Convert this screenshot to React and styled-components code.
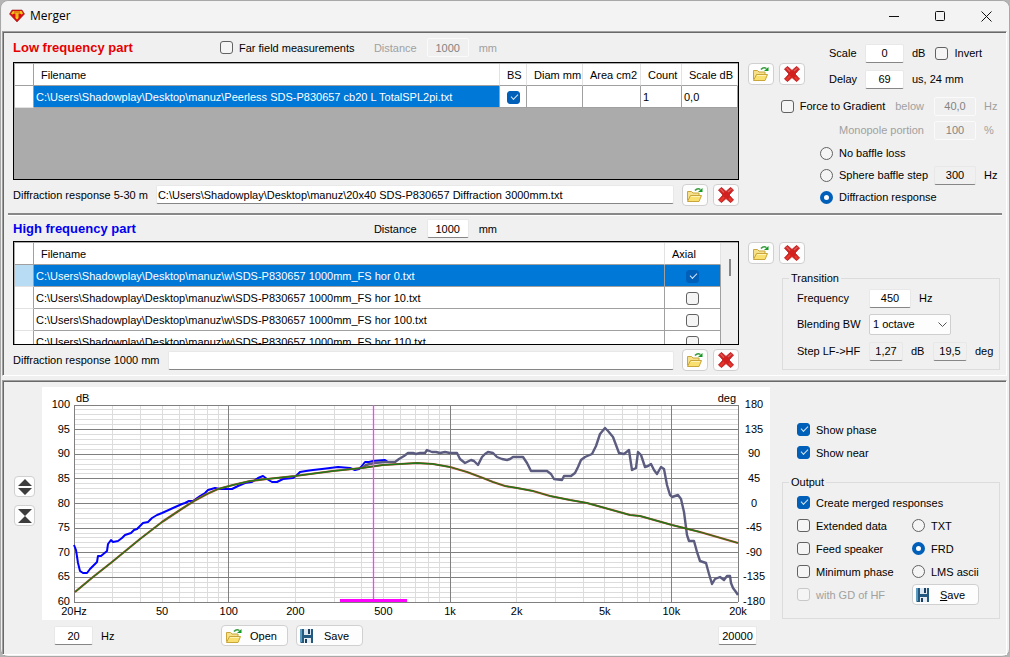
import { useState } from 'react';
import styled, { createGlobalStyle, css } from 'styled-components';

const GlobalStyle = createGlobalStyle`
  * {
    box-sizing: border-box;
  }
  body {
    margin: 0;
    background: #b4b4b4;
    color: #000;
    font-family: 'Liberation Sans', Arial, sans-serif;
    font-size: 11px;
    line-height: 14px;
  }
  input, button, select {
    font: inherit;
    color: inherit;
    margin: 0;
  }
`;

const folder = 'C:\\Users\\Shadowplay\\Desktop\\manuz\\';

const farFiles = ['0', '10', '100', '110'].map((angle) => ({
  name: `${folder}w\\SDS-P830657 1000mm_FS hor ${angle}.txt`,
  axial: angle === '0',
}));

const lowColumns = [
  { title: 'Filename', width: 466 },
  { title: 'BS', width: 27 },
  { title: 'Diam mm', width: 56 },
  { title: 'Area cm2', width: 58 },
  { title: 'Count', width: 41 },
  { title: 'Scale dB', width: 56 },
];

const highCurve =
  '74,545 76,550 78,563 80,571 83,573 87,573 90,569 97,562 98,556 101,556 107,551 108,544 111,540 113,542 118,541 122,538 125,535 131,533 134,530 137,529 143,523 148,522 152,518 157,515 162,513 173,508 182,504 185,503 189,501 193,501 200,496 205,493 208,490 215,488 220,489 232,489 238,486 245,483 252,482 258,478 263,476 267,479 272,482 277,482 283,479 293,478 296,476 300,472 306,471 313,470 322,469 330,468 338,467 350,468 355,470 359,469 361,467 365,462 369,462 373,461 385,460 388,462';

const mergedCurve =
  '362,468 366,465 374,463 385,462 395,462 399,459 404,456 408,453 413,453 416,454 420,453 425,453 427,450 432,452 436,452 440,453 445,452 450,453 457,453 460,459 465,463 471,460 474,461 478,465 482,457 485,454 488,452 493,453 497,457 502,459 507,460 510,459 513,457 523,457 527,463 531,471 547,471 551,474 554,479 562,480 564,476 571,476 575,473 578,467 581,460 585,457 592,454 596,446 600,434 605,428 608,431 613,437 616,445 619,453 624,454 629,450 630,457 632,470 636,468 638,452 641,455 645,467 648,466 651,464 654,470 657,474 661,467 664,469 667,485 670,495 672,497 678,495 681,499 684,512 687,535 689,541 694,541 697,552 700,561 706,563 709,574 712,584 715,579 720,577 724,580 727,576 730,576 731,583 733,588 736,592 738,595';

const nearCurve =
  '75,592 93,577 112,562 140,539 162,522 180,510 194,501 207,494 218,489 233,485 250,481 267,479 295,476 333,471 362,468 383,465 400,464 417,463 433,464 450,467 467,472 483,478 493,482 505,486 517,488 533,491 550,496 570,500 587,503 605,508 630,515 640,516 672,525 700,532 738,543';

const plot = { left: 74, right: 738, top: 405, bottom: 602 };

const freqX = (hz) =>
  plot.left + ((plot.right - plot.left) * Math.log10(hz / 20)) / 3;
const levelY = (db) =>
  plot.bottom - ((plot.bottom - plot.top) * (db - 60)) / 40;

const freqLines = [10, 100, 1000, 10000]
  .flatMap((decade) => [1, 2, 3, 4, 5, 6, 7, 8, 9].map((n) => n * decade))
  .filter((hz) => hz > 20 && hz < 20000);

const freqLabels = [
  [20, '20Hz'],
  [50, '50'],
  [100, '100'],
  [200, '200'],
  [500, '500'],
  [1000, '1k'],
  [2000, '2k'],
  [5000, '5k'],
  [10000, '10k'],
  [20000, '20k'],
];

const levels = Array.from({ length: 41 }, (_, i) => 60 + i);
const majors = levels.filter((db) => db % 5 === 0);

const FolderIcon = () => (
  <svg width='18' height='16' viewBox='0 0 18 16' aria-hidden='true'>
    <path d='M1.500 13.500V4.500h4l1.500 1.500h6v2' fill='#f6e08a' stroke='#c9a63a' />
    <path d='M1.500 14.500L4.500 8.500h11l-2.500 6z' fill='#f9df70' stroke='#c9a63a' strokeLinejoin='round' />
    <path d='M5 9.500h9' stroke='#fdf3b8' />
    <path d='M9 3.500Q11.500 .5 14.500 2.500' fill='none' stroke='#3a9a40' strokeWidth='1.500' />
    <path d='M16.500 1v4h-4.500z' fill='#149a22' />
  </svg>
);

const DeleteIcon = () => (
  <svg width='18' height='18' viewBox='0 0 18 18' aria-hidden='true'>
    <path
      d='M4.500 1.500L9 5.500l4.500-4 3 2.500L12 9l4.500 5-3 2.500L9 12.500l-4.500 4-3-2.500L6 9 1.500 4z'
      fill='#d2201f'
      stroke='#c4282a'
      strokeLinejoin='round'
    />
    <path d='M3.500 3l3.500 3.500M14.500 3L11 6' stroke='#dc5c58' strokeWidth='1.500' />
    <path d='M7 11l-3.500 4M12 12l2.500 3' stroke='#e63a2c' strokeWidth='2' />
  </svg>
);

const DiskIcon = () => (
  <svg width='14' height='14' viewBox='0 0 14 14' aria-hidden='true'>
    <path d='M0 0h13v14H1l-1-1z' fill='#23587f' />
    <path d='M0 0h2v13H0z' fill='#5e9bc0' />
    <path d='M4 0h7v6H4z' fill='#dce8f1' />
    <path d='M8 0h2v5H8z' fill='#1b3f60' />
    <path d='M4 9h7v5H4z' fill='#e6eef4' />
    <path d='M5 10h2v4H5z' fill='#1b3f60' />
  </svg>
);

const LogoIcon = () => (
  <svg width='16' height='14' viewBox='0 0 16 14' aria-hidden='true'>
    <path d='M3 1h10l2.500 4L8 13 .5 5z' fill='#d80f0f' stroke='#98201a' strokeWidth='.6' />
    <path d='M4 2h8.500l1.500 2.500-1.500 1L11 4.500H9.500V9L8 10.500 6.500 9V4.500H5l-1.500 1L2 4.500z' fill='#f0c81c' />
    <path d='M5 2.500h6v1H5z' fill='#d8400f' />
    <path d='M7.500 4h1v4h-1z' fill='#e8a010' />
  </svg>
);

const FileButtons = ({ label }) => (
  <ButtonPair>
    <IconButton aria-label={`Open ${label}`}>
      <FolderIcon />
    </IconButton>
    <IconButton aria-label={`Remove ${label}`}>
      <DeleteIcon />
    </IconButton>
  </ButtonPair>
);

const Check = ({ children, ...rest }) => (
  <Choice $muted={rest.disabled}>
    <Tick type='checkbox' {...rest} />
    {children}
  </Choice>
);

const Option = ({ children, ...rest }) => (
  <Choice>
    <Dot type='radio' {...rest} />
    {children}
  </Choice>
);

const Chart = () => (
  <ChartSvg viewBox='42 387 728 233' role='img' aria-label='Frequency response'>
    <g shapeRendering='crispEdges'>
      {levels.map((db) => (
        <line key={db} x1={plot.left} x2={plot.right} y1={levelY(db)} y2={levelY(db)} stroke='#dcdcdc' />
      ))}
      {freqLines.map((hz) => (
        <line key={hz} x1={freqX(hz)} x2={freqX(hz)} y1={plot.top} y2={plot.bottom} stroke='#dcdcdc' />
      ))}
      {majors.map((db) => (
        <line key={db} x1={plot.left} x2={plot.right} y1={levelY(db)} y2={levelY(db)} stroke='#808080' />
      ))}
      {[20, 100, 1000, 10000, 20000].map((hz) => (
        <line key={hz} x1={freqX(hz)} x2={freqX(hz)} y1={plot.top} y2={plot.bottom} stroke='#808080' />
      ))}
    </g>
    <g fill='none' strokeLinejoin='round'>
      <polyline points={highCurve} stroke='#0000ff' strokeWidth='2' />
      <polyline points={mergedCurve} stroke='#5c5c80' strokeWidth='2.400' />
      <polyline points={nearCurve} stroke='#c83c28' strokeWidth='2.200' />
      <polyline points={nearCurve} stroke='#1c7a1c' strokeWidth='1.300' />
      <line x1='373.500' x2='373.500' y1='405' y2='600' stroke='#ff3cff' strokeWidth='1.300' />
    </g>
    <rect x='340' y='599' width='67' height='3' fill='#ff00ff' />
    <g textAnchor='end'>
      {majors.map((db) => (
        <text key={db} x='70' y={levelY(db) + 3}>
          {db}
        </text>
      ))}
      <text x='736' y='402'>deg</text>
    </g>
    <text x='76' y='402'>dB</text>
    <g textAnchor='middle'>
      {majors.map((db) => (
        <text key={db} x='754' y={levelY(db) + 3}>
          {(db - 80) * 9}
        </text>
      ))}
      {freqLabels.map(([hz, label]) => (
        <text key={hz} x={freqX(hz)} y='615'>
          {label}
        </text>
      ))}
    </g>
  </ChartSvg>
);

const App = () => {
  const [baffle, setBaffle] = useState('diffraction');
  const [format, setFormat] = useState('FRD');

  return (
    <Window>
      <GlobalStyle />
      <TitleBar>
        <LogoIcon />
        <Title>Merger</Title>
        <Caption aria-label='Minimize'>
          <svg width='11' height='11'>
            <path d='M0 5.500h10' stroke='#111' />
          </svg>
        </Caption>
        <Caption aria-label='Maximize'>
          <svg width='11' height='11'>
            <rect x='.5' y='.5' width='9' height='9' rx='1' fill='none' stroke='#111' />
          </svg>
        </Caption>
        <Caption aria-label='Close'>
          <svg width='11' height='11'>
            <path d='M.5 .5l10 10M10.500 .5l-10 10' stroke='#111' />
          </svg>
        </Caption>
      </TitleBar>

      <Panel>
        <Section>
          <Main>
            <Heading>
              <Name $color='#e60000'>Low frequency part</Name>
              <Check>Far field measurements</Check>
              <Distance $muted>
                Distance
                <Field $width={42} defaultValue='1000' disabled />
                mm
              </Distance>
            </Heading>
            <GridBox $height={118}>
              <Grid>
                <colgroup>
                  <Col $width={19} />
                  {lowColumns.map((col, i) => (
                    <Col key={col.title} $width={i ? col.width : null} />
                  ))}
                </colgroup>
                <thead>
                  <tr>
                    <Th />
                    {lowColumns.map((col) => (
                      <Th key={col.title}>{col.title}</Th>
                    ))}
                  </tr>
                </thead>
                <tbody>
                  <tr>
                    <Td />
                    <Td $selected>{`${folder}Peerless SDS-P830657 cb20 L TotalSPL2pi.txt`}</Td>
                    <Td $center>
                      <Tick type='checkbox' defaultChecked aria-label='BS' />
                    </Td>
                    <Td />
                    <Td />
                    <Td>1</Td>
                    <Td>0,0</Td>
                  </tr>
                </tbody>
              </Grid>
            </GridBox>
            <PathRow>
              <label htmlFor='low-diffraction'>Diffraction response 5-30 m</label>
              <PathField
                id='low-diffraction'
                defaultValue={`${folder}20x40 SDS-P830657 Diffraction 3000mm.txt`}
              />
              <FileButtons label='low diffraction response' />
            </PathRow>
          </Main>
          <Side>
            <LowTop>
              <FileButtons label='low frequency file' />
              <ScaleRows>
                <label htmlFor='scale'>Scale</label>
                <Field id='scale' $width={39} defaultValue='0' />
                <Units>
                  dB
                  <Check>Invert</Check>
                </Units>
                <label htmlFor='delay'>Delay</label>
                <Field id='delay' $width={39} defaultValue='69' />
                <Units>us, 24 mm</Units>
              </ScaleRows>
            </LowTop>
            <Row $height={24}>
              <Check>Force to Gradient</Check>
              <Muted as='label' htmlFor='below'>below</Muted>
              <Field id='below' $width={42} defaultValue='40,0' disabled />
              <Unit $muted>Hz</Unit>
            </Row>
            <Row $height={24}>
              <Muted as='label' htmlFor='monopole'>Monopole portion</Muted>
              <Field id='monopole' $width={42} defaultValue='100' disabled />
              <Unit $muted>%</Unit>
            </Row>
            <BaffleRows>
              <Row $height={22}>
                <Option name='baffle' checked={baffle === 'none'} onChange={() => setBaffle('none')}>
                  No baffle loss
                </Option>
              </Row>
              <Row $height={22}>
                <Option name='baffle' checked={baffle === 'sphere'} onChange={() => setBaffle('sphere')}>
                  Sphere baffle step
                </Option>
                <Push />
                <Field $width={42} $gray defaultValue='300' aria-label='Sphere baffle step' />
                <Unit>Hz</Unit>
              </Row>
              <Row $height={22}>
                <Option
                  name='baffle'
                  checked={baffle === 'diffraction'}
                  onChange={() => setBaffle('diffraction')}
                >
                  Diffraction response
                </Option>
              </Row>
            </BaffleRows>
          </Side>
        </Section>

        <Divider />

        <Section>
          <Main>
            <Heading $short>
              <Name $color='#0000f0'>High frequency part</Name>
              <Distance>
                Distance
                <Field $width={42} defaultValue='1000' />
                mm
              </Distance>
            </Heading>
            <GridBox $height={104}>
              <Grid>
                <colgroup>
                  <Col $width={19} />
                  <Col />
                  <Col $width={56} />
                </colgroup>
                <thead>
                  <tr>
                    <Th />
                    <Th>Filename</Th>
                    <Th>Axial</Th>
                  </tr>
                </thead>
                <tbody>
                  {farFiles.map((file) => (
                    <tr key={file.name}>
                      <Td $marker={file.axial} />
                      <Td $selected={file.axial}>{file.name}</Td>
                      <Td $selected={file.axial} $center>
                        <Tick type='checkbox' defaultChecked={file.axial} aria-label='Axial' />
                      </Td>
                    </tr>
                  ))}
                </tbody>
              </Grid>
              <ScrollTrack>
                <ScrollThumb />
              </ScrollTrack>
            </GridBox>
            <PathRow $tall>
              <label htmlFor='high-diffraction'>Diffraction response 1000 mm</label>
              <PathField id='high-diffraction' />
              <FileButtons label='high diffraction response' />
            </PathRow>
          </Main>
          <Side>
            <HighTop>
              <FileButtons label='high frequency file' />
            </HighTop>
            <Group>
              <legend>Transition</legend>
              <Row $height={26}>
                <GroupLabel htmlFor='frequency'>Frequency</GroupLabel>
                <Field id='frequency' $width={42} defaultValue='450' />
                <Unit>Hz</Unit>
              </Row>
              <Row $height={26}>
                <GroupLabel htmlFor='blending'>Blending BW</GroupLabel>
                <SelectBox>
                  <Select id='blending' defaultValue='1'>
                    <option value='1'>1 octave</option>
                    <option value='2'>2 octaves</option>
                  </Select>
                  <svg width='9' height='6'>
                    <path d='M.5 .5l4 4 4-4' fill='none' stroke='#555' />
                  </svg>
                </SelectBox>
              </Row>
              <Row $height={28}>
                <GroupLabel htmlFor='step'>Step LF-&gt;HF</GroupLabel>
                <Field id='step' $width={34} $gray readOnly value='1,27' />
                <Unit>dB</Unit>
                <Field $width={34} $gray readOnly value='19,5' aria-label='Step phase' />
                <Unit>deg</Unit>
              </Row>
            </Group>
          </Side>
        </Section>
      </Panel>

      <Panel $last>
        <Section>
          <Zoomers>
            <ZoomButton aria-label='Expand range'>
              <svg width='14' height='16'>
                <path d='M7 0l7 7H0zM7 16l7-7H0z' fill='#3c3c3c' />
              </svg>
            </ZoomButton>
            <ZoomButton aria-label='Compress range'>
              <svg width='14' height='16'>
                <path d='M0 1h14L7 8zM0 15h14L7 8z' fill='#3c3c3c' />
              </svg>
            </ZoomButton>
          </Zoomers>
          <ChartColumn>
            <Chart />
            <ChartFooter>
              <Field $width={39} defaultValue='20' aria-label='Lowest frequency' />
              <span>Hz</span>
              <TextButton>
                <FolderIcon />
                <span>Open</span>
              </TextButton>
              <TextButton>
                <DiskIcon />
                <span>Save</span>
              </TextButton>
              <Push />
              <Field $width={39} defaultValue='20000' aria-label='Highest frequency' />
            </ChartFooter>
          </ChartColumn>
          <Options>
            <ShowRows>
              <Check defaultChecked>Show phase</Check>
              <Check defaultChecked>Show near</Check>
            </ShowRows>
            <Group>
              <legend>Output</legend>
              <OutputGrid>
                <Wide>
                  <Check defaultChecked>Create merged responses</Check>
                </Wide>
                <Check>Extended data</Check>
                <Option name='format' checked={format === 'TXT'} onChange={() => setFormat('TXT')}>
                  TXT
                </Option>
                <Check>Feed speaker</Check>
                <Option name='format' checked={format === 'FRD'} onChange={() => setFormat('FRD')}>
                  FRD
                </Option>
                <Check>Minimum phase</Check>
                <Option name='format' checked={format === 'LMS'} onChange={() => setFormat('LMS')}>
                  LMS ascii
                </Option>
                <Check disabled>with GD of HF</Check>
                <TextButton>
                  <DiskIcon />
                  <span>
                    <u>S</u>ave
                  </span>
                </TextButton>
              </OutputGrid>
            </Group>
          </Options>
        </Section>
      </Panel>
    </Window>
  );
};

export default App;

const Window = styled.div`
  display: flex;
  flex-direction: column;
  min-height: 100vh;
  padding: 0 2px 1px 1px;
  background: #f0f0f0;
  border: 1px solid #a8a8a8;
  border-radius: 8px;
`;

const TitleBar = styled.header`
  display: flex;
  align-items: center;
  height: 30px;
  margin-right: -2px;
  padding-left: 7px;
  background: #f3f3f3;
  border-radius: 8px 8px 0 0;
`;
const Title = styled.h1`
  flex: 1;
  margin: 0 0 0 5px;
  font: 12px/16px 'Open Sans', sans-serif;
`;
const Caption = styled.button`
  display: flex;
  align-items: center;
  justify-content: center;
  width: 46px;
  height: 28px;
  padding: 0;
  border: 0;
  background: none;
`;

const Panel = styled.section`
  padding-left: 10px;
  margin-bottom: 4px;
  border: 1px solid #a0a0a0;
  border-right-color: #fff;
  border-bottom-color: #fff;
  box-shadow: inset 1px 1px #696969;
  padding-top: 1px;
  ${(props) =>
    props.$last &&
    css`
      flex: 1;
      margin-bottom: 0;
    `}
`;
const Section = styled.div`
  display: flex;
`;
const Main = styled.div`
  flex: 1;
  min-width: 0;
`;
const Side = styled.div`
  width: 267px;
  padding-left: 9px;
`;
const Divider = styled.hr`
  height: 3px;
  margin: 4px 4px 0 -5px;
  border: 0;
  background: #888;
  border-bottom: 1px solid #fff;
`;

const Heading = styled.div`
  display: flex;
  align-items: center;
  height: ${(props) => (props.$short ? '25px' : '29px')};
  padding-right: 242px;
`;
const Name = styled.h2`
  width: 207px;
  margin: 0;
  color: ${(props) => props.$color};
  font-size: 13px;
  line-height: 16px;
`;
const Distance = styled.label`
  display: flex;
  align-items: center;
  gap: 10px;
  margin-left: auto;
  color: ${(props) => (props.$muted ? '#a0a0a0' : 'inherit')};
`;

const GridBox = styled.div`
  display: flex;
  align-items: flex-start;
  height: ${(props) => props.$height}px;
  padding: 1px 0 0 1px;
  overflow: hidden;
  background: #ababab;
  border: 1px solid #000;
`;
const Grid = styled.table`
  flex: 1;
  width: 100%;
  table-layout: fixed;
  border-collapse: separate;
  border-spacing: 0;
  background: #fff;
`;
const Col = styled.col`
  width: ${(props) => (props.$width ? `${props.$width}px` : 'auto')};
`;
const Th = styled.th`
  height: 22px;
  padding: 0 0 0 7px;
  border-right: 1px solid #e2e2e2;
  border-bottom: 1px solid #a0a0a0;
  font-weight: normal;
  text-align: left;
  white-space: nowrap;
  &:first-child {
    border-right-color: #a0a0a0;
  }
`;
const Td = styled.td`
  height: 22px;
  padding: ${(props) => (props.$center ? '0' : '0 0 0 2px')};
  border-right: 1px solid #a0a0a0;
  border-bottom: 1px solid #a0a0a0;
  text-align: ${(props) => (props.$center ? 'center' : 'left')};
  white-space: nowrap;
  &:first-child {
    border-bottom-color: #e2e2e2;
  }
  ${(props) =>
    props.$selected &&
    css`
      background: #0078d7;
      color: #fff;
    `}
  ${(props) =>
    props.$marker &&
    css`
      background: #b9dcf5;
    `}
`;
const ScrollTrack = styled.div`
  align-self: stretch;
  width: 17px;
  padding: 16px 0 0 8px;
  background: #f0f0f0;
`;
const ScrollThumb = styled.div`
  width: 2px;
  height: 17px;
  background: #868686;
`;

const PathRow = styled.div`
  display: flex;
  align-items: center;
  gap: 8px;
  height: ${(props) => (props.$tall ? '30px' : '29px')};
`;
const fieldBase = css`
  padding: 0;
  border: 1px solid #e8e8e8;
  border-bottom-color: #868686;
  border-radius: 2px;
  background: #fff;
  outline: 0;
`;
const PathField = styled.input`
  ${fieldBase}
  flex: 1;
  min-width: 0;
  height: 19px;
  padding-left: 1px;
`;
const Field = styled.input`
  ${fieldBase}
  flex: none;
  width: ${(props) => props.$width}px;
  height: 19px;
  text-align: center;
  background: ${(props) => (props.$gray ? '#f0f0f0' : '#fff')};
  &:disabled {
    background: #f0f0f0;
    border-color: #fafafa;
    color: #838383;
  }
`;

const Choice = styled.label`
  display: flex;
  align-items: center;
  gap: 6px;
  white-space: nowrap;
  color: ${(props) => (props.$muted ? '#a0a0a0' : 'inherit')};
`;
const Tick = styled.input`
  appearance: none;
  display: inline-block;
  flex: none;
  position: relative;
  width: 13px;
  height: 13px;
  border: 1px solid #626262;
  border-radius: 3px;
  background: #f5f5f5;
  vertical-align: middle;
  &:checked {
    border-color: #005fb8;
    background: #005fb8;
  }
  &:checked::after {
    content: '';
    position: absolute;
    left: 3px;
    top: 2px;
    width: 6px;
    height: 3px;
    border: solid #d4e6f5;
    border-width: 0 0 1px 1px;
    transform: rotate(-45deg);
  }
  &:disabled {
    border-color: #c8c8c8;
  }
`;
const Dot = styled.input`
  appearance: none;
  flex: none;
  width: 13px;
  height: 13px;
  border: 1px solid #626262;
  border-radius: 50%;
  background: #f5f5f5;
  &:checked {
    border: 4px solid #005fb8;
    background: #fff;
  }
`;

const ButtonPair = styled.div`
  display: flex;
  gap: 5px;
`;
const buttonBase = css`
  display: flex;
  align-items: center;
  border: 1px solid #d0d0d0;
  border-radius: 4px;
  background: #fdfdfd;
`;
const IconButton = styled.button`
  ${buttonBase}
  justify-content: center;
  width: 26px;
  height: 22px;
  padding: 0;
`;
const TextButton = styled.button`
  ${buttonBase}
  width: 67px;
  height: 21px;
  padding: 0 3px;
  span {
    flex: 1;
    text-align: center;
  }
`;

const LowTop = styled.div`
  display: flex;
  justify-content: space-between;
  padding: 7px 0 2px;
  > ${ButtonPair} {
    margin-top: 23px;
  }
`;
const ScaleRows = styled.div`
  display: grid;
  grid-template-columns: 28px 39px 88px;
  grid-auto-rows: 26px;
  column-gap: 8px;
  align-items: center;
  padding-right: 6px;
`;
const Units = styled.div`
  display: flex;
  gap: 10px;
  white-space: nowrap;
`;
const HighTop = styled.div`
  padding: 26px 0 7px;
`;
const Row = styled.div`
  display: flex;
  align-items: center;
  justify-content: flex-end;
  height: ${(props) => props.$height}px;
  > ${Choice} {
    margin-right: 10px;
  }
`;
const Muted = styled.span`
  margin-right: 10px;
  color: #a0a0a0;
`;
const Unit = styled.span`
  width: 22px;
  margin-left: 8px;
  color: ${(props) => (props.$muted ? '#a0a0a0' : 'inherit')};
`;
const Push = styled.div`
  flex: 1;
`;
const BaffleRows = styled.div`
  padding-left: 72px;
  ${Row} {
    justify-content: flex-start;
  }
  ${Choice} {
    margin-right: 0;
  }
`;

const Group = styled.fieldset`
  min-width: 0;
  margin: 0 6px 0 34px;
  padding: 0 0 4px 14px;
  border: 1px solid #dcdcdc;
  legend {
    margin-left: -8px;
    padding: 0 2px;
  }
  ${Row} {
    justify-content: flex-start;
  }
`;
const GroupLabel = styled.label`
  width: 72px;
  white-space: nowrap;
`;
const SelectBox = styled.div`
  position: relative;
  width: 82px;
  svg {
    position: absolute;
    right: 4px;
    top: 8px;
    pointer-events: none;
  }
`;
const Select = styled.select`
  appearance: none;
  width: 100%;
  height: 21px;
  padding: 0 3px;
  border: 1px solid #cfcfcf;
  border-radius: 2px;
  background: #fdfdfd;
`;

const Zoomers = styled.div`
  display: flex;
  flex-direction: column;
  gap: 8px;
  width: 29px;
  padding: 94px 0 0 1px;
`;
const ZoomButton = styled.button`
  ${buttonBase}
  justify-content: center;
  width: 21px;
  height: 21px;
  padding: 0;
`;
const ChartColumn = styled.div`
  flex: 1;
  min-width: 0;
  padding-top: 5px;
`;
const ChartSvg = styled.svg`
  display: block;
  width: 100%;
  background: #fff;
  font-size: 11px;
`;
const ChartFooter = styled.div`
  display: flex;
  align-items: center;
  gap: 8px;
  height: 31px;
  padding: 0 13px 0 12px;
  > span {
    width: 112px;
  }
`;
const Options = styled.div`
  width: 236px;
  > ${Group} {
    margin-left: 12px;
  }
`;
const ShowRows = styled.div`
  display: grid;
  grid-auto-rows: 23px;
  padding: 36px 0 11px 27px;
`;
const OutputGrid = styled.div`
  display: grid;
  grid-template-columns: 115px 1fr;
  grid-auto-rows: 23px;
  align-items: center;
  padding: 2px 0 8px;
`;
const Wide = styled.div`
  grid-column: span 2;
`;
